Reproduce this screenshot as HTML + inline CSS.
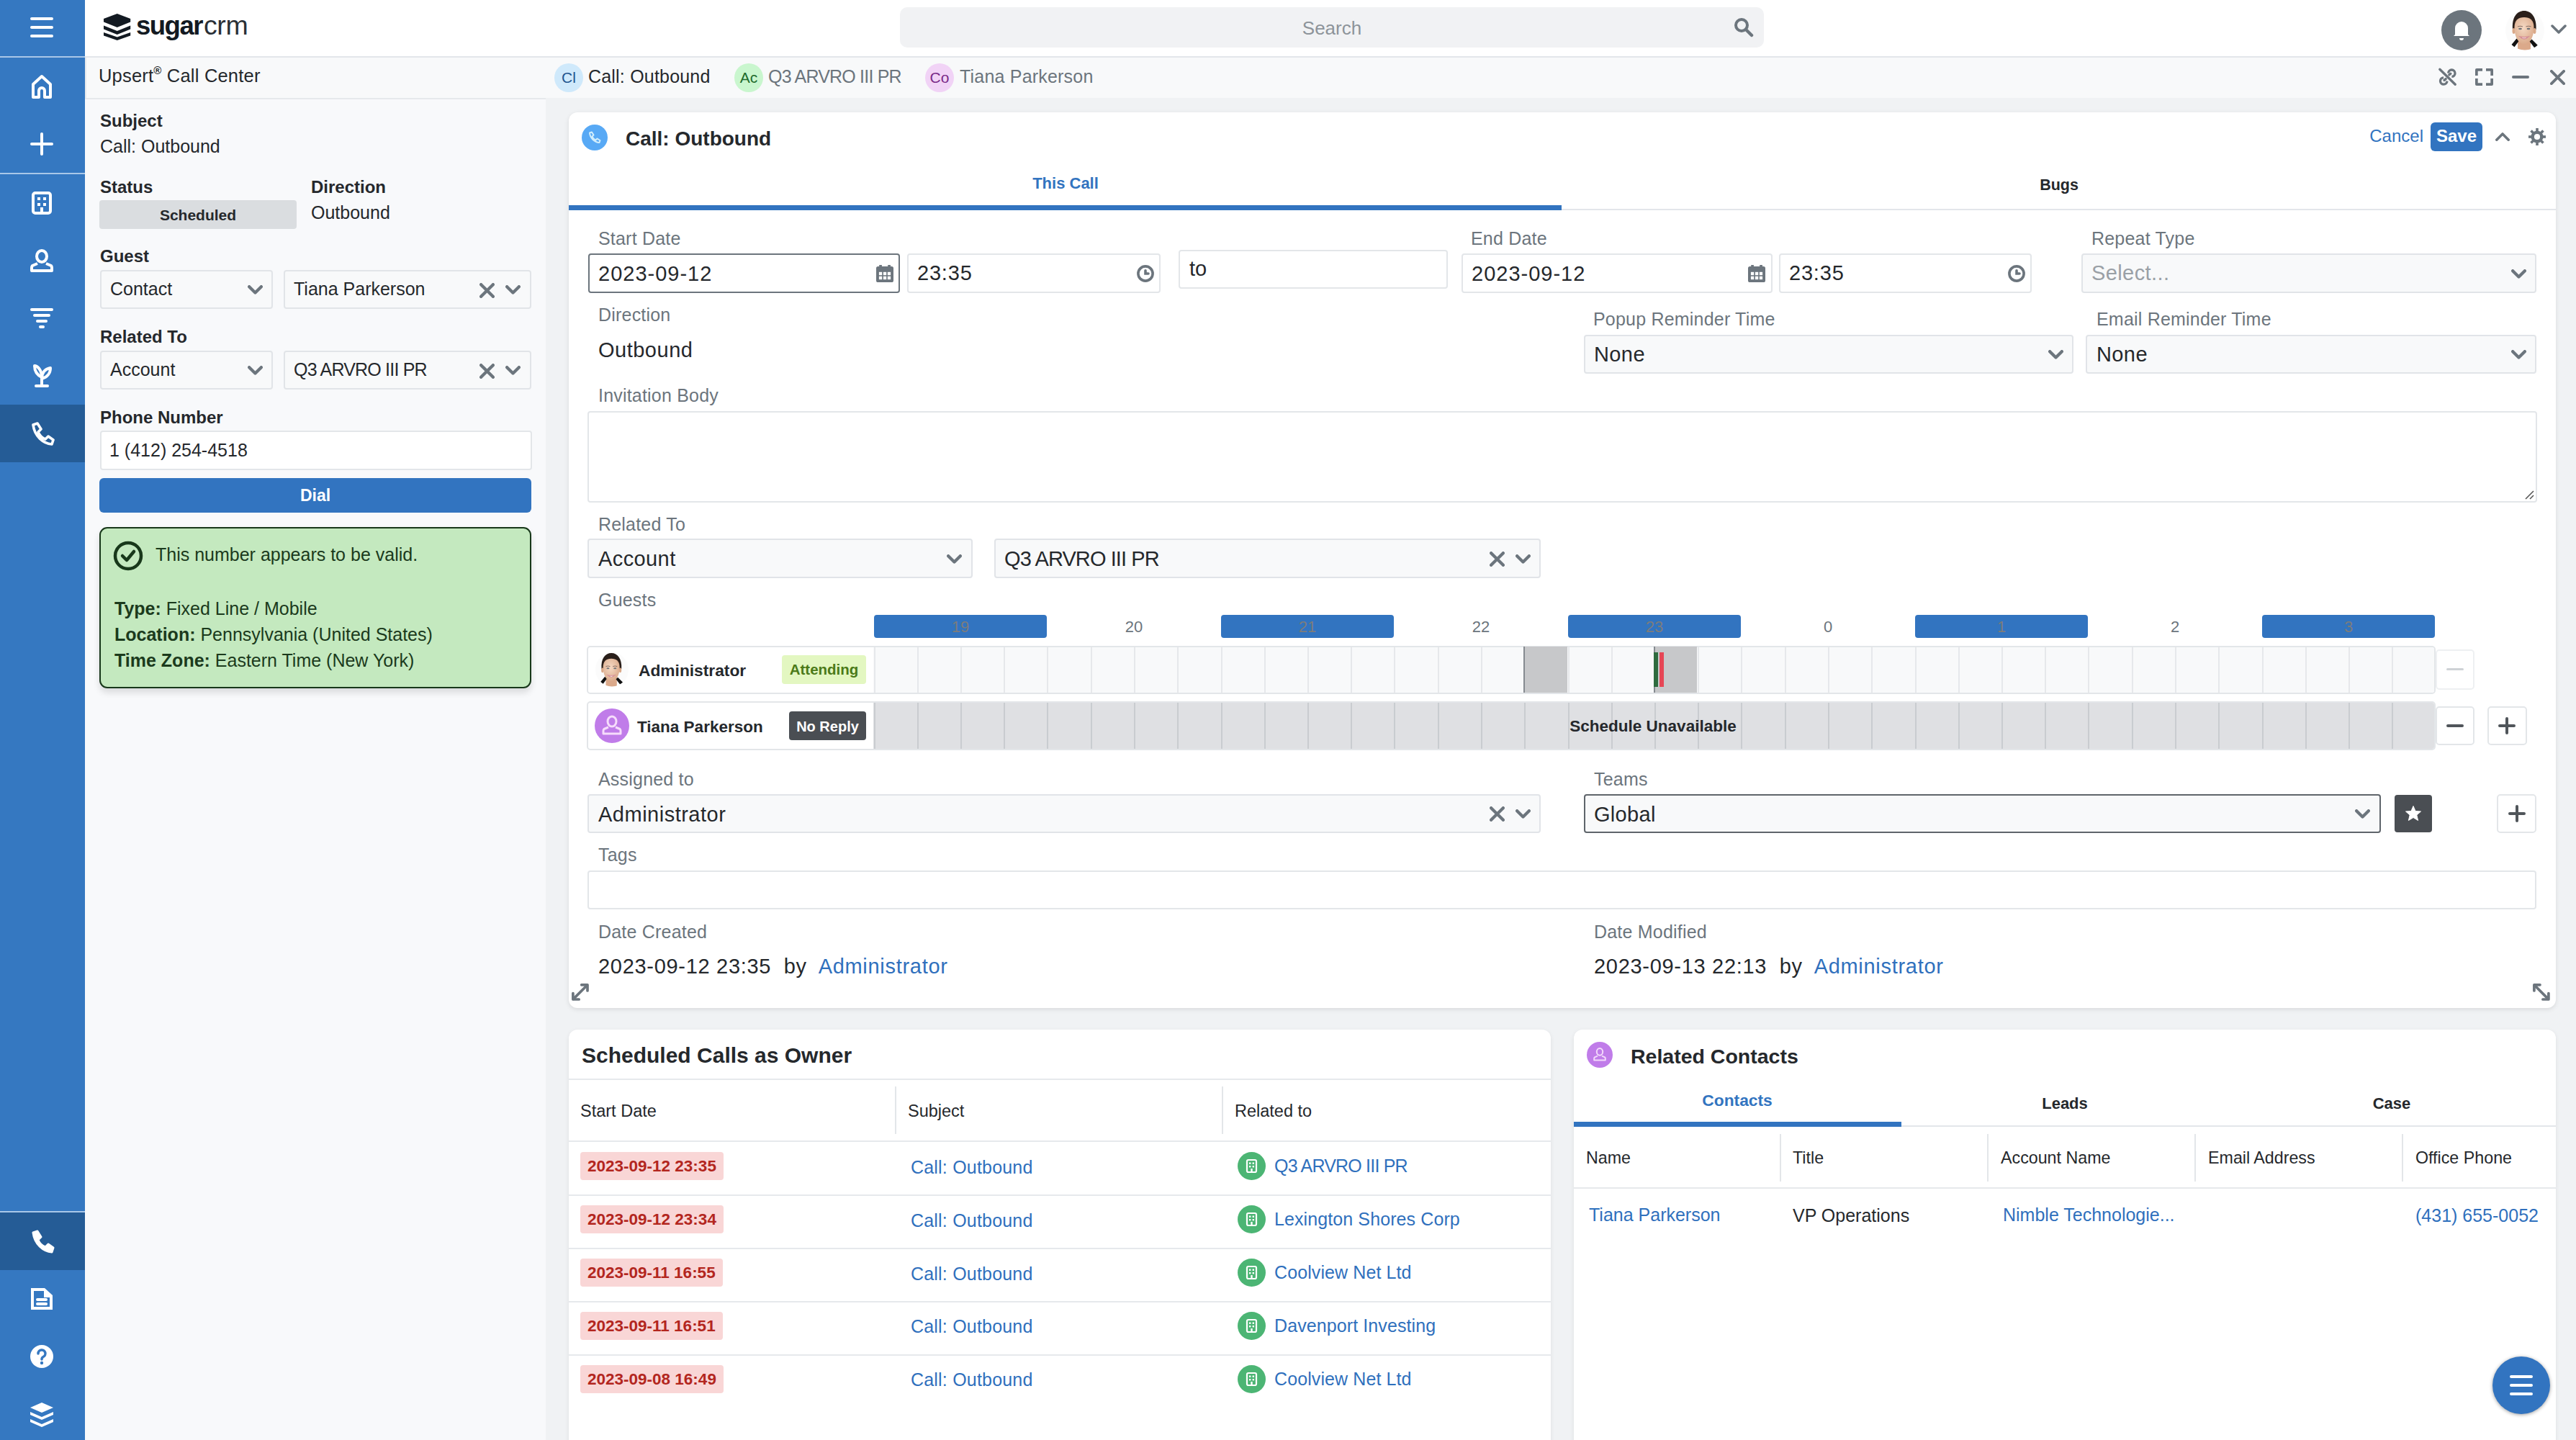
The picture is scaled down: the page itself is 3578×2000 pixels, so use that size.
<!DOCTYPE html><html><head><meta charset="utf-8"><style>
html,body{margin:0;padding:0;width:3578px;height:2000px;overflow:hidden;background:#f0f2f4;font-family:'Liberation Sans', sans-serif;}
.t{position:absolute;line-height:1;white-space:nowrap;}
.b{position:absolute;box-sizing:border-box;}
</style></head><body>
<div class="b" style="left:0px;top:0px;width:3578px;height:78px;background:#fff"></div>
<div class="b" style="left:118px;top:78px;width:3460px;height:2px;background:#e3e6ea"></div>
<div class="b" style="left:118px;top:80px;width:3460px;height:56px;background:#f8f9fa"></div>
<div class="b" style="left:118px;top:136px;width:640px;height:1864px;background:#f8f9fb"></div>
<div class="b" style="left:118px;top:136px;width:640px;height:2px;background:#e6e9ec"></div>
<div class="b" style="left:758px;top:136px;width:2820px;height:1864px;background:#f0f2f4"></div>
<div class="b" style="left:118px;top:80px;width:2px;height:56px;background:#e6e9ec"></div>
<div class="b" style="left:0px;top:0px;width:118px;height:2000px;background:#3578c1"></div>
<div class="b" style="left:0px;top:78px;width:118px;height:2px;background:#a9c7e8"></div>
<div class="b" style="left:0px;top:240px;width:118px;height:2px;background:#a9c7e8"></div>
<div class="b" style="left:0px;top:562px;width:118px;height:80px;background:#255c96"></div>
<div class="b" style="left:0px;top:1682px;width:118px;height:2px;background:#a9c7e8"></div>
<div class="b" style="left:0px;top:1684px;width:118px;height:80px;background:#255c96"></div>
<svg class="b" style="left:40px;top:22px;" width="36" height="32" viewBox="0 0 36 32"><g fill="#fff"><rect x="2" y="2" width="32" height="4" rx="2"/><rect x="2" y="14" width="32" height="4" rx="2"/><rect x="2" y="26" width="32" height="4" rx="2"/></g></svg>
<svg class="b" style="left:42px;top:102px;" width="32" height="36" viewBox="0 0 32 36"><path d="M4 33 V15 L16 4 L28 15 V33 H20 V24 a4 4 0 0 0 -8 0 V33 Z" fill="none" stroke="#fff" stroke-width="4" stroke-linejoin="round"/></svg>
<svg class="b" style="left:40px;top:182px;" width="36" height="36" viewBox="0 0 36 36"><g stroke="#fff" stroke-width="4" stroke-linecap="round"><line x1="18" y1="4" x2="18" y2="32"/><line x1="4" y1="18" x2="32" y2="18"/></g></svg>
<svg class="b" style="left:42px;top:264px;" width="32" height="36" viewBox="0 0 32 36"><rect x="4" y="4" width="24" height="28" rx="3" fill="none" stroke="#fff" stroke-width="4"/><g fill="#fff"><rect x="10" y="10" width="4" height="4"/><rect x="18" y="10" width="4" height="4"/><rect x="10" y="18" width="4" height="4"/><rect x="18" y="18" width="4" height="4"/><rect x="14" y="24" width="4" height="8"/></g></svg>
<svg class="b" style="left:40px;top:344px;" width="36" height="36" viewBox="0 0 36 36"><g fill="none" stroke="#fff" stroke-width="4" stroke-linejoin="round"><ellipse cx="18" cy="12" rx="7" ry="8"/><path d="M12 22 L5 25 Q4 26 4 28 V32 H32 V28 Q32 26 31 25 L24 22"/></g></svg>
<svg class="b" style="left:40px;top:424px;" width="36" height="36" viewBox="0 0 36 36"><g stroke="#fff" stroke-width="4" stroke-linecap="round"><line x1="4" y1="6" x2="32" y2="6"/><line x1="8" y1="14" x2="28" y2="14"/><line x1="12" y1="22" x2="24" y2="22"/><line x1="16" y1="30" x2="20" y2="30"/></g></svg>
<svg class="b" style="left:40px;top:502px;" width="36" height="40" viewBox="0 0 36 40"><g fill="none" stroke="#fff" stroke-width="4" stroke-linecap="round" stroke-linejoin="round"><path d="M18 34 V22"/><path d="M10 34 H26"/><path d="M18 22 C18 12 12 6 8 6 C8 12 10 18 18 22 Z"/><path d="M18 24 C26 22 30 16 30 9 C24 10 18 14 18 24 Z"/></g></svg>
<svg class="b" style="left:40px;top:584px;" width="36" height="36" viewBox="0 0 36 36"><path d="M6 6 L12 4 L17 12 L13 16 C15 21 18 24 23 26 L27 22 L34 27 L32 33 C20 32 8 22 6 6 Z" fill="none" stroke="#fff" stroke-width="3.6" stroke-linejoin="round"/></svg>
<svg class="b" style="left:40px;top:1706px;" width="36" height="36" viewBox="0 0 36 36"><path d="M6 6 L12 4 L17 12 L13 16 C15 21 18 24 23 26 L27 22 L34 27 L32 33 C20 32 8 22 6 6 Z" fill="#fff" stroke="#fff" stroke-width="3" stroke-linejoin="round"/></svg>
<svg class="b" style="left:40px;top:1786px;" width="36" height="36" viewBox="0 0 36 36"><path d="M3 3 H22 L33 13 V33 H3 Z" fill="#fff"/><rect x="7" y="7" width="14" height="22" fill="#3578c1"/><path d="M21 7 V16 H29 V29 H21 Z" fill="#3578c1"/><rect x="10" y="17" width="16" height="4" rx="2" fill="#fff"/><rect x="10" y="23" width="16" height="4" rx="2" fill="#fff"/></svg>
<svg class="b" style="left:40px;top:1866px;" width="36" height="36" viewBox="0 0 36 36"><circle cx="18" cy="18" r="16" fill="#fff"/><path d="M13 14 a5 5 0 1 1 7 4.5 c-1.5 .8 -2 1.5 -2 3.5" fill="none" stroke="#3578c1" stroke-width="3.5" stroke-linecap="round"/><circle cx="18" cy="27" r="2.2" fill="#3578c1"/></svg>
<svg class="b" style="left:40px;top:1946px;" width="36" height="36" viewBox="0 0 36 36"><g fill="#fff"><path d="M18 2 L34 9 L18 16 L2 9 Z"/><path d="M2 15 L18 22 L34 15 V19 L18 26 L2 19 Z"/><path d="M2 25 L18 32 L34 25 V29 L18 36 L2 29 Z"/></g></svg>
<svg class="b" style="left:143.8px;top:19.4px;" width="38" height="38" viewBox="0 0 38 38"><g fill="#131a22"><path d="M18.75 0 L37.2 7.1 V11.6 L18.75 18.9 L0 11.6 V7.1 Z"/><path d="M0 16.5 L18.75 24.1 L37.2 16.5 V21.4 L18.75 29 L0 21.4 Z"/><path d="M0 25.9 L18.75 32.6 L37.2 25.9 V30.4 L18.75 37.1 L0 30.4 Z"/></g></svg>
<div class="t" style="left:189px;top:17.5px;font-size:36.5px;color:#131a22;font-weight:700;letter-spacing:-1.5px">sugar</div>
<div class="t" style="left:283px;top:16.7px;font-size:37.5px;color:#2a3036;font-weight:400;letter-spacing:-0.4px">crm</div>
<div class="b" style="left:1250px;top:10px;width:1200px;height:56px;background:#f1f2f4;border-radius:10px"></div>
<div class="t" style="left:1850px;transform:translateX(-50%);top:26.4px;font-size:26px;color:#8d949a;font-weight:400;">Search</div>
<svg class="b" style="left:2408px;top:24px;" width="28" height="28" viewBox="0 0 28 28"><circle cx="11" cy="11" r="8" fill="none" stroke="#6c757d" stroke-width="4"/><line x1="17" y1="17" x2="25" y2="25" stroke="#6c757d" stroke-width="4.5" stroke-linecap="round"/></svg>
<svg class="b" style="left:3391px;top:14px;" width="56" height="56" viewBox="0 0 56 56"><circle cx="28" cy="28" r="28" fill="#6c757d"/><path d="M19 34 V25 a9 9 0 0 1 18 0 V34 l2 2 H17 Z" fill="#fff"/><path d="M25 39 h6 a3 3 0 0 1 -6 0z" fill="#fff"/></svg>
<svg class="b" style="left:3480px;top:14px;" width="54" height="56" viewBox="0 0 54 56"><defs><clipPath id="av"><ellipse cx="27" cy="28" rx="27" ry="27.5"/></clipPath><radialGradient id="avg" cx="0.45" cy="0.4" r="0.65"><stop offset="0" stop-color="#f5d9c4"/><stop offset="1" stop-color="#d9a888"/></radialGradient></defs><ellipse cx="27" cy="28" rx="27" ry="27.5" fill="#fbfbfb"/><g clip-path="url(#av)"><path d="M7 57 L14 42 L20 40 L33 40 L39 42 L47 57 Z" fill="#fff"/><path d="M17 38 L35 38 L35 57 L17 57 Z" fill="#dba98a"/><path d="M6 51 L15.5 39.5 L19 42.5 L10.5 54 Z" fill="#111"/><path d="M48 52 L36.5 40.5 L33.5 43.5 L43 56 Z" fill="#111"/><path d="M10 27 C8.5 10 16 1 26 1 C36 1 43.5 10 42.5 27 Z" fill="#2a1f1a"/><ellipse cx="11.5" cy="29" rx="2" ry="4" fill="#d9a888"/><ellipse cx="40.5" cy="29" rx="2" ry="4" fill="#d9a888"/><path d="M12.5 24 C12.5 14 18 10 26 10 C34 10 39.5 14 39.5 24 C39.5 37 34 47 26 47 C18 47 12.5 37 12.5 24 Z" fill="url(#avg)"/><path d="M17 23 Q20.5 21.5 24 23" stroke="#8a7065" stroke-width="1.2" fill="none"/><path d="M28.5 23 Q32 21.5 35.5 23" stroke="#8a7065" stroke-width="1.2" fill="none"/><ellipse cx="20.5" cy="26" rx="2.4" ry="1.2" fill="#6f7378"/><ellipse cx="32" cy="26" rx="2.4" ry="1.2" fill="#6f7378"/><path d="M20 37 Q26 43 32 37 Q26 38.5 20 37 Z" fill="#fff" stroke="#d58d95" stroke-width="1.3"/></g></svg>
<svg class="b" style="left:3542px;top:32px;" width="24" height="18" viewBox="0 0 24 18"><path d="M3 4 L12 13 L21 4" fill="none" stroke="#6c757d" stroke-width="3.5" stroke-linecap="round" stroke-linejoin="round"/></svg>
<div class="t" style="left:137px;top:92.8px;font-size:25.5px;color:#25282c;font-weight:400;letter-spacing:0.2px">Upsert<sup style="font-size:15px;vertical-align:top;position:relative;top:-3px;font-weight:700">&reg;</sup> Call Center</div>
<svg class="b" style="left:770px;top:88px;" width="40" height="40" viewBox="0 0 40 40"><circle cx="20" cy="20" r="20" fill="#cfe9fb"/></svg>
<div class="t" style="left:790px;transform:translateX(-50%);top:97.1px;font-size:21px;color:#21558f;font-weight:400;">Cl</div>
<div class="t" style="left:817px;top:94.2px;font-size:25px;color:#25282c;font-weight:400;letter-spacing:0.2px">Call: Outbound</div>
<svg class="b" style="left:1020px;top:88px;" width="40" height="40" viewBox="0 0 40 40"><circle cx="20" cy="20" r="20" fill="#c9f6ce"/></svg>
<div class="t" style="left:1040px;transform:translateX(-50%);top:97.1px;font-size:21px;color:#1f6b2c;font-weight:400;">Ac</div>
<div class="t" style="left:1067px;top:94.2px;font-size:25px;color:#6c757d;font-weight:400;letter-spacing:-0.8px">Q3 ARVRO III PR<span style="letter-spacing:0"></span></div>
<svg class="b" style="left:1285px;top:88px;" width="40" height="40" viewBox="0 0 40 40"><circle cx="20" cy="20" r="20" fill="#f1d3f6"/></svg>
<div class="t" style="left:1305px;transform:translateX(-50%);top:97.1px;font-size:21px;color:#7a2a88;font-weight:400;">Co</div>
<div class="t" style="left:1333px;top:94.2px;font-size:25px;color:#6c757d;font-weight:400;letter-spacing:0.2px">Tiana Parkerson</div>
<svg class="b" style="left:3386px;top:94px;" width="28" height="28" viewBox="0 0 28 28"><g fill="none" stroke="#6c757d" stroke-width="3.3" stroke-linecap="round"><line x1="2.8" y1="2.3" x2="24.2" y2="23.3"/><path d="M14.6 7.6 A4.7 4.7 0 1 1 19.4 12.4" stroke-linecap="butt"/><path d="M12.9 18.6 A4.7 4.7 0 1 1 8.1 13.8" stroke-linecap="butt"/><line x1="15.8" y1="9.9" x2="17.9" y2="8.2"/><line x1="9" y1="17.4" x2="11.2" y2="15.6"/></g></svg>
<svg class="b" style="left:3438px;top:95px;" width="25" height="24" viewBox="0 0 25 24"><g fill="#6c757d"><path d="M0 2 Q0 0 2 0 H10 V3.7 H3.7 V10 H0 Z"/><path d="M25 2 Q25 0 23 0 H15 V3.7 H21.3 V10 H25 Z"/><path d="M0 22 Q0 24 2 24 H10 V20.3 H3.7 V14 H0 Z"/><path d="M25 22 Q25 24 23 24 H15 V20.3 H21.3 V14 H25 Z"/></g></svg>
<svg class="b" style="left:3489px;top:105px;" width="24" height="4" viewBox="0 0 24 4"><rect x="0" y="0" width="24" height="4" rx="2" fill="#6c757d"/></svg>
<svg class="b" style="left:3542px;top:97px;" width="21" height="21" viewBox="0 0 21 21"><g stroke="#6c757d" stroke-width="3.8" stroke-linecap="round"><line x1="1.9" y1="1.9" x2="19.1" y2="19.1"/><line x1="19.1" y1="1.9" x2="1.9" y2="19.1"/></g></svg>
<div class="t" style="left:139px;top:156.1px;font-size:24px;color:#25282c;font-weight:700;">Subject</div>
<div class="t" style="left:139px;top:191.2px;font-size:25px;color:#25282c;font-weight:400;">Call: Outbound</div>
<div class="t" style="left:139px;top:248.1px;font-size:24px;color:#25282c;font-weight:700;">Status</div>
<div class="b" style="left:138px;top:278px;width:274px;height:40px;background:#dadde0;border-radius:4px"></div>
<div class="t" style="left:275px;transform:translateX(-50%);top:287.6px;font-size:21px;color:#25282c;font-weight:700;">Scheduled</div>
<div class="t" style="left:432px;top:248.1px;font-size:24px;color:#25282c;font-weight:700;">Direction</div>
<div class="t" style="left:432px;top:283.2px;font-size:25px;color:#25282c;font-weight:400;">Outbound</div>
<div class="t" style="left:139px;top:344.1px;font-size:24px;color:#25282c;font-weight:700;">Guest</div>
<div class="b" style="left:139px;top:375px;width:240px;height:54px;background:#f8f9fa;border:2px solid #e1e4e8;border-radius:4px"></div>
<div class="t" style="left:153px;top:389.2px;font-size:25px;color:#25282c;font-weight:400;">Contact</div>
<svg class="b" style="left:344px;top:395.5px;" width="21" height="13" viewBox="0 0 21 13"><path d="M2.15 2.15 L10.5 10.549999999999999 L18.85 2.15" fill="none" stroke="#6c757d" stroke-width="4.3" stroke-linecap="round" stroke-linejoin="round"/></svg>
<div class="b" style="left:394px;top:375px;width:344px;height:54px;background:#f8f9fa;border:2px solid #e1e4e8;border-radius:4px"></div>
<div class="t" style="left:408px;top:389.2px;font-size:25px;color:#25282c;font-weight:400;">Tiana Parkerson</div>
<svg class="b" style="left:666px;top:392.5px;" width="21" height="21" viewBox="0 0 21 21"><g stroke="#6c757d" stroke-width="4.3" stroke-linecap="round"><line x1="2.15" y1="2.15" x2="18.85" y2="18.85"/><line x1="18.85" y1="2.15" x2="2.15" y2="18.85"/></g></svg>
<svg class="b" style="left:702px;top:395.5px;" width="21" height="13" viewBox="0 0 21 13"><path d="M2.15 2.15 L10.5 10.549999999999999 L18.85 2.15" fill="none" stroke="#6c757d" stroke-width="4.3" stroke-linecap="round" stroke-linejoin="round"/></svg>
<div class="t" style="left:139px;top:456.1px;font-size:24px;color:#25282c;font-weight:700;">Related To</div>
<div class="b" style="left:139px;top:487px;width:240px;height:54px;background:#f8f9fa;border:2px solid #e1e4e8;border-radius:4px"></div>
<div class="t" style="left:153px;top:501.2px;font-size:25px;color:#25282c;font-weight:400;">Account</div>
<svg class="b" style="left:344px;top:507.5px;" width="21" height="13" viewBox="0 0 21 13"><path d="M2.15 2.15 L10.5 10.549999999999999 L18.85 2.15" fill="none" stroke="#6c757d" stroke-width="4.3" stroke-linecap="round" stroke-linejoin="round"/></svg>
<div class="b" style="left:394px;top:487px;width:344px;height:54px;background:#f8f9fa;border:2px solid #e1e4e8;border-radius:4px"></div>
<div class="t" style="left:408px;top:501.2px;font-size:25px;color:#25282c;font-weight:400;letter-spacing:-0.8px">Q3 ARVRO III PR</div>
<svg class="b" style="left:666px;top:504.5px;" width="21" height="21" viewBox="0 0 21 21"><g stroke="#6c757d" stroke-width="4.3" stroke-linecap="round"><line x1="2.15" y1="2.15" x2="18.85" y2="18.85"/><line x1="18.85" y1="2.15" x2="2.15" y2="18.85"/></g></svg>
<svg class="b" style="left:702px;top:507.5px;" width="21" height="13" viewBox="0 0 21 13"><path d="M2.15 2.15 L10.5 10.549999999999999 L18.85 2.15" fill="none" stroke="#6c757d" stroke-width="4.3" stroke-linecap="round" stroke-linejoin="round"/></svg>
<div class="t" style="left:139px;top:568.1px;font-size:24px;color:#25282c;font-weight:700;">Phone Number</div>
<div class="b" style="left:139px;top:598px;width:600px;height:55px;background:#fff;border:2px solid #e3e6e9;border-radius:4px"></div>
<div class="t" style="left:152px;top:613.2px;font-size:25px;color:#25282c;font-weight:400;">1 (412) 254-4518</div>
<div class="b" style="left:138px;top:664px;width:600px;height:48px;background:#3274c0;border-radius:6px"></div>
<div class="t" style="left:438px;transform:translateX(-50%);top:676.9px;font-size:23px;color:#fff;font-weight:700;">Dial</div>
<div class="b" style="left:138px;top:732px;width:600px;height:224px;background:#c4e9bf;border:2.5px solid #18381a;border-radius:11px;box-shadow:0 6px 10px rgba(0,0,0,0.12)"></div>
<svg class="b" style="left:156px;top:750px;" width="44" height="44" viewBox="0 0 44 44"><circle cx="22" cy="22" r="18" fill="none" stroke="#18381a" stroke-width="4.5"/><path d="M14 22 L20 28 L30 16" fill="none" stroke="#18381a" stroke-width="4.5" stroke-linecap="round" stroke-linejoin="round"/></svg>
<div class="t" style="left:216px;top:758.2px;font-size:25px;color:#1b3a1c;font-weight:400;">This number appears to be valid.</div>
<div class="t" style="left:159px;top:833.2px;font-size:25px;color:#1b3a1c;font-weight:400;"><b>Type:</b> Fixed Line / Mobile</div>
<div class="t" style="left:159px;top:869.2px;font-size:25px;color:#1b3a1c;font-weight:400;"><b>Location:</b> Pennsylvania (United States)</div>
<div class="t" style="left:159px;top:905.2px;font-size:25px;color:#1b3a1c;font-weight:400;"><b>Time Zone:</b> Eastern Time (New York)</div>
<div class="b" style="left:790px;top:156px;width:2760px;height:1244px;background:#fff;border-radius:12px;box-shadow:0 2px 6px rgba(0,0,0,0.10)"></div>
<svg class="b" style="left:808px;top:173px;" width="36" height="36" viewBox="0 0 36 36"><circle cx="18" cy="18" r="18" fill="#58a9f5"/><path d="M11 11.5 L14 10.5 L16.5 14.5 L14.5 16.5 C15.5 19 17 20.5 19.5 21.5 L21.5 19.5 L25.5 22 L24.5 25 C17.5 24.5 11.5 18.5 11 11.5 Z" fill="none" stroke="#d2eefc" stroke-width="2" stroke-linejoin="round"/></svg>
<div class="t" style="left:869px;top:179.2px;font-size:28px;color:#25282c;font-weight:700;">Call: Outbound</div>
<div class="t" style="right:212px;top:177.1px;font-size:24px;color:#3274c0;font-weight:400;">Cancel</div>
<div class="b" style="left:3376px;top:170px;width:72px;height:40px;background:#3274c0;border-radius:6px"></div>
<div class="t" style="left:3412px;transform:translateX(-50%);top:177.1px;font-size:24px;color:#fff;font-weight:700;">Save</div>
<svg class="b" style="left:3466px;top:184px;" width="20" height="12" viewBox="0 0 20 12"><path d="M1.8 10.2 L10 2 L18.2 10.2" fill="none" stroke="#6c757d" stroke-width="3.6" stroke-linecap="round" stroke-linejoin="round"/></svg>
<svg class="b" style="left:3512px;top:178px;" width="24" height="24" viewBox="0 0 24 24"><g fill="#6c757d"><circle cx="12" cy="12" r="8.6"/><rect x="10.2" y="0" width="3.6" height="24" transform="rotate(0 12 12)"/><rect x="10.2" y="0" width="3.6" height="24" transform="rotate(45 12 12)"/><rect x="10.2" y="0" width="3.6" height="24" transform="rotate(90 12 12)"/><rect x="10.2" y="0" width="3.6" height="24" transform="rotate(135 12 12)"/></g><circle cx="12" cy="12" r="4.1" fill="#fff"/></svg>
<div class="b" style="left:790px;top:290px;width:2760px;height:2px;background:#e3e6ea"></div>
<div class="b" style="left:790px;top:285px;width:1379px;height:7px;background:#3274c0"></div>
<div class="t" style="left:1480px;transform:translateX(-50%);top:243.8px;font-size:22px;color:#3274c0;font-weight:700;">This Call</div>
<div class="t" style="left:2860px;transform:translateX(-50%);top:247.2px;font-size:21.5px;color:#25282c;font-weight:700;">Bugs</div>
<div class="t" style="left:831px;top:319.2px;font-size:25px;color:#6c757d;font-weight:400;letter-spacing:0.2px">Start Date</div>
<div class="b" style="left:817px;top:352px;width:433px;height:55px;background:#fff;border:2px solid #6c757d;border-radius:4px"></div>
<div class="t" style="left:831px;top:365.9px;font-size:29px;color:#25282c;font-weight:400;letter-spacing:1px">2023-09-12</div>
<svg class="b" style="left:1217px;top:368px;" width="24" height="24" viewBox="0 0 24 24"><rect x="0" y="2" width="24" height="22" rx="2.6" fill="#6c757d"/><rect x="4.2" y="0" width="3.7" height="4" fill="#6c757d"/><rect x="16.2" y="0" width="3.7" height="4" fill="#6c757d"/><g fill="#fff"><rect x="3.9" y="9.8" width="4.3" height="4.4"/><rect x="9.9" y="9.8" width="4.3" height="4.4"/><rect x="15.8" y="9.8" width="4.3" height="4.4"/><rect x="3.9" y="15.75" width="4.3" height="4.4"/><rect x="9.9" y="15.75" width="4.3" height="4.4"/><rect x="15.8" y="15.75" width="4.3" height="4.4"/></g></svg>
<div class="b" style="left:1260px;top:352px;width:352px;height:55px;background:#fff;border:2px solid #e3e6e9;border-radius:4px"></div>
<div class="t" style="left:1274px;top:364.9px;font-size:29px;color:#25282c;font-weight:400;letter-spacing:0.8px">23:35</div>
<svg class="b" style="left:1579px;top:368px;" width="24" height="24" viewBox="0 0 24 24"><circle cx="12" cy="12" r="10.1" fill="none" stroke="#6c757d" stroke-width="3.6"/><path d="M12 7.7 V12 H16" fill="none" stroke="#6c757d" stroke-width="3.6" stroke-linecap="round" stroke-linejoin="miter"/></svg>
<div class="b" style="left:1637px;top:347px;width:374px;height:54px;background:#fff;border:2px solid #e3e6e9;border-radius:4px"></div>
<div class="t" style="left:1652px;top:358.9px;font-size:29px;color:#25282c;font-weight:400;">to</div>
<div class="t" style="left:2043px;top:319.2px;font-size:25px;color:#6c757d;font-weight:400;letter-spacing:0.2px">End Date</div>
<div class="b" style="left:2030px;top:352px;width:432px;height:55px;background:#fff;border:2px solid #e3e6e9;border-radius:4px"></div>
<div class="t" style="left:2044px;top:365.9px;font-size:29px;color:#25282c;font-weight:400;letter-spacing:1px">2023-09-12</div>
<svg class="b" style="left:2428px;top:368px;" width="24" height="24" viewBox="0 0 24 24"><rect x="0" y="2" width="24" height="22" rx="2.6" fill="#6c757d"/><rect x="4.2" y="0" width="3.7" height="4" fill="#6c757d"/><rect x="16.2" y="0" width="3.7" height="4" fill="#6c757d"/><g fill="#fff"><rect x="3.9" y="9.8" width="4.3" height="4.4"/><rect x="9.9" y="9.8" width="4.3" height="4.4"/><rect x="15.8" y="9.8" width="4.3" height="4.4"/><rect x="3.9" y="15.75" width="4.3" height="4.4"/><rect x="9.9" y="15.75" width="4.3" height="4.4"/><rect x="15.8" y="15.75" width="4.3" height="4.4"/></g></svg>
<div class="b" style="left:2471px;top:352px;width:351px;height:55px;background:#fff;border:2px solid #e3e6e9;border-radius:4px"></div>
<div class="t" style="left:2485px;top:364.9px;font-size:29px;color:#25282c;font-weight:400;letter-spacing:0.8px">23:35</div>
<svg class="b" style="left:2789px;top:368px;" width="24" height="24" viewBox="0 0 24 24"><circle cx="12" cy="12" r="10.1" fill="none" stroke="#6c757d" stroke-width="3.6"/><path d="M12 7.7 V12 H16" fill="none" stroke="#6c757d" stroke-width="3.6" stroke-linecap="round" stroke-linejoin="miter"/></svg>
<div class="t" style="left:2905px;top:319.2px;font-size:25px;color:#6c757d;font-weight:400;letter-spacing:0.2px">Repeat Type</div>
<div class="b" style="left:2891px;top:352px;width:632px;height:55px;background:#f8f9fa;border:2px solid #e1e4e8;border-radius:4px"></div>
<div class="t" style="left:2905px;top:364.9px;font-size:29px;color:#9aa0a6;font-weight:400;letter-spacing:0.4px">Select...</div>
<svg class="b" style="left:3488px;top:373.5px;" width="21" height="13" viewBox="0 0 21 13"><path d="M2.15 2.15 L10.5 10.549999999999999 L18.85 2.15" fill="none" stroke="#6c757d" stroke-width="4.3" stroke-linecap="round" stroke-linejoin="round"/></svg>
<div class="t" style="left:831px;top:425.2px;font-size:25px;color:#6c757d;font-weight:400;letter-spacing:0.2px">Direction</div>
<div class="t" style="left:831px;top:471.9px;font-size:29px;color:#25282c;font-weight:400;letter-spacing:0.5px">Outbound</div>
<div class="t" style="left:2213px;top:431.2px;font-size:25px;color:#6c757d;font-weight:400;letter-spacing:0.2px">Popup Reminder Time</div>
<div class="b" style="left:2200px;top:465px;width:680px;height:54px;background:#f8f9fa;border:2px solid #e1e4e8;border-radius:4px"></div>
<div class="t" style="left:2214px;top:477.9px;font-size:29px;color:#25282c;font-weight:400;letter-spacing:0.4px">None</div>
<svg class="b" style="left:2845px;top:486px;" width="21" height="13" viewBox="0 0 21 13"><path d="M2.15 2.15 L10.5 10.549999999999999 L18.85 2.15" fill="none" stroke="#6c757d" stroke-width="4.3" stroke-linecap="round" stroke-linejoin="round"/></svg>
<div class="t" style="left:2912px;top:431.2px;font-size:25px;color:#6c757d;font-weight:400;letter-spacing:0.2px">Email Reminder Time</div>
<div class="b" style="left:2897px;top:465px;width:626px;height:54px;background:#f8f9fa;border:2px solid #e1e4e8;border-radius:4px"></div>
<div class="t" style="left:2912px;top:477.9px;font-size:29px;color:#25282c;font-weight:400;letter-spacing:0.4px">None</div>
<svg class="b" style="left:3488px;top:485.5px;" width="21" height="13" viewBox="0 0 21 13"><path d="M2.15 2.15 L10.5 10.549999999999999 L18.85 2.15" fill="none" stroke="#6c757d" stroke-width="4.3" stroke-linecap="round" stroke-linejoin="round"/></svg>
<div class="t" style="left:831px;top:537.2px;font-size:25px;color:#6c757d;font-weight:400;letter-spacing:0.2px">Invitation Body</div>
<div class="b" style="left:816px;top:571px;width:2708px;height:127px;background:#fff;border:2px solid #e3e6e9;border-radius:4px"></div>
<svg class="b" style="left:3506px;top:680px;" width="14" height="14" viewBox="0 0 14 14"><g stroke="#555" stroke-width="1.6"><line x1="2" y1="13" x2="13" y2="2"/><line x1="8" y1="13" x2="13" y2="8"/></g></svg>
<div class="t" style="left:831px;top:716.2px;font-size:25px;color:#6c757d;font-weight:400;letter-spacing:0.2px">Related To</div>
<div class="b" style="left:816px;top:748px;width:535px;height:55px;background:#f8f9fa;border:2px solid #e1e4e8;border-radius:4px"></div>
<div class="t" style="left:831px;top:761.9px;font-size:29px;color:#25282c;font-weight:400;letter-spacing:0.4px">Account</div>
<svg class="b" style="left:1315px;top:769.5px;" width="21" height="13" viewBox="0 0 21 13"><path d="M2.15 2.15 L10.5 10.549999999999999 L18.85 2.15" fill="none" stroke="#6c757d" stroke-width="4.3" stroke-linecap="round" stroke-linejoin="round"/></svg>
<div class="b" style="left:1381px;top:748px;width:759px;height:55px;background:#f8f9fa;border:2px solid #e1e4e8;border-radius:4px"></div>
<div class="t" style="left:1395px;top:761.9px;font-size:29px;color:#25282c;font-weight:400;letter-spacing:-0.9px">Q3 ARVRO III PR</div>
<svg class="b" style="left:2069px;top:765.5px;" width="21" height="21" viewBox="0 0 21 21"><g stroke="#6c757d" stroke-width="4.3" stroke-linecap="round"><line x1="2.15" y1="2.15" x2="18.85" y2="18.85"/><line x1="18.85" y1="2.15" x2="2.15" y2="18.85"/></g></svg>
<svg class="b" style="left:2105px;top:769.5px;" width="21" height="13" viewBox="0 0 21 13"><path d="M2.15 2.15 L10.5 10.549999999999999 L18.85 2.15" fill="none" stroke="#6c757d" stroke-width="4.3" stroke-linecap="round" stroke-linejoin="round"/></svg>
<div class="t" style="left:831px;top:821.2px;font-size:25px;color:#6c757d;font-weight:400;letter-spacing:0.2px">Guests</div>
<div class="b" style="left:1214px;top:854px;width:240px;height:32px;background:#3274c0;border-radius:4px"></div>
<div class="t" style="left:1334px;transform:translateX(-50%);top:859.8px;font-size:22px;color:#7c7c7c;font-weight:400;">19</div>
<div class="t" style="left:1575px;transform:translateX(-50%);top:859.8px;font-size:22px;color:#6c757d;font-weight:400;">20</div>
<div class="b" style="left:1696px;top:854px;width:240px;height:32px;background:#3274c0;border-radius:4px"></div>
<div class="t" style="left:1816px;transform:translateX(-50%);top:859.8px;font-size:22px;color:#7c7c7c;font-weight:400;">21</div>
<div class="t" style="left:2057px;transform:translateX(-50%);top:859.8px;font-size:22px;color:#6c757d;font-weight:400;">22</div>
<div class="b" style="left:2178px;top:854px;width:240px;height:32px;background:#3274c0;border-radius:4px"></div>
<div class="t" style="left:2298px;transform:translateX(-50%);top:859.8px;font-size:22px;color:#7c7c7c;font-weight:400;">23</div>
<div class="t" style="left:2539px;transform:translateX(-50%);top:859.8px;font-size:22px;color:#6c757d;font-weight:400;">0</div>
<div class="b" style="left:2660px;top:854px;width:240px;height:32px;background:#3274c0;border-radius:4px"></div>
<div class="t" style="left:2780px;transform:translateX(-50%);top:859.8px;font-size:22px;color:#7c7c7c;font-weight:400;">1</div>
<div class="t" style="left:3021px;transform:translateX(-50%);top:859.8px;font-size:22px;color:#6c757d;font-weight:400;">2</div>
<div class="b" style="left:3142px;top:854px;width:240px;height:32px;background:#3274c0;border-radius:4px"></div>
<div class="t" style="left:3262px;transform:translateX(-50%);top:859.8px;font-size:22px;color:#7c7c7c;font-weight:400;">3</div>
<div class="b" style="left:815px;top:897px;width:2568px;height:67px;background:#fff;border:2px solid #e3e6e9;border-radius:5px"></div>
<div class="b" style="left:1213px;top:899px;width:2168px;height:63px;background:#f8f9fa;border-top-right-radius:3px;border-bottom-right-radius:3px"></div>
<div class="b" style="left:1214px;top:899px;width:2px;height:63px;background:#e6e8eb"></div>
<div class="b" style="left:1274px;top:899px;width:2px;height:63px;background:#e6e8eb"></div>
<div class="b" style="left:1334px;top:899px;width:2px;height:63px;background:#e6e8eb"></div>
<div class="b" style="left:1394px;top:899px;width:2px;height:63px;background:#e6e8eb"></div>
<div class="b" style="left:1454px;top:899px;width:2px;height:63px;background:#e6e8eb"></div>
<div class="b" style="left:1515px;top:899px;width:2px;height:63px;background:#e6e8eb"></div>
<div class="b" style="left:1575px;top:899px;width:2px;height:63px;background:#e6e8eb"></div>
<div class="b" style="left:1635px;top:899px;width:2px;height:63px;background:#e6e8eb"></div>
<div class="b" style="left:1696px;top:899px;width:2px;height:63px;background:#e6e8eb"></div>
<div class="b" style="left:1756px;top:899px;width:2px;height:63px;background:#e6e8eb"></div>
<div class="b" style="left:1816px;top:899px;width:2px;height:63px;background:#e6e8eb"></div>
<div class="b" style="left:1876px;top:899px;width:2px;height:63px;background:#e6e8eb"></div>
<div class="b" style="left:1936px;top:899px;width:2px;height:63px;background:#e6e8eb"></div>
<div class="b" style="left:1997px;top:899px;width:2px;height:63px;background:#e6e8eb"></div>
<div class="b" style="left:2057px;top:899px;width:2px;height:63px;background:#e6e8eb"></div>
<div class="b" style="left:2117px;top:899px;width:2px;height:63px;background:#e6e8eb"></div>
<div class="b" style="left:2178px;top:899px;width:2px;height:63px;background:#e6e8eb"></div>
<div class="b" style="left:2238px;top:899px;width:2px;height:63px;background:#e6e8eb"></div>
<div class="b" style="left:2298px;top:899px;width:2px;height:63px;background:#e6e8eb"></div>
<div class="b" style="left:2358px;top:899px;width:2px;height:63px;background:#e6e8eb"></div>
<div class="b" style="left:2418px;top:899px;width:2px;height:63px;background:#e6e8eb"></div>
<div class="b" style="left:2479px;top:899px;width:2px;height:63px;background:#e6e8eb"></div>
<div class="b" style="left:2539px;top:899px;width:2px;height:63px;background:#e6e8eb"></div>
<div class="b" style="left:2599px;top:899px;width:2px;height:63px;background:#e6e8eb"></div>
<div class="b" style="left:2660px;top:899px;width:2px;height:63px;background:#e6e8eb"></div>
<div class="b" style="left:2720px;top:899px;width:2px;height:63px;background:#e6e8eb"></div>
<div class="b" style="left:2780px;top:899px;width:2px;height:63px;background:#e6e8eb"></div>
<div class="b" style="left:2840px;top:899px;width:2px;height:63px;background:#e6e8eb"></div>
<div class="b" style="left:2900px;top:899px;width:2px;height:63px;background:#e6e8eb"></div>
<div class="b" style="left:2961px;top:899px;width:2px;height:63px;background:#e6e8eb"></div>
<div class="b" style="left:3021px;top:899px;width:2px;height:63px;background:#e6e8eb"></div>
<div class="b" style="left:3081px;top:899px;width:2px;height:63px;background:#e6e8eb"></div>
<div class="b" style="left:3142px;top:899px;width:2px;height:63px;background:#e6e8eb"></div>
<div class="b" style="left:3202px;top:899px;width:2px;height:63px;background:#e6e8eb"></div>
<div class="b" style="left:3262px;top:899px;width:2px;height:63px;background:#e6e8eb"></div>
<div class="b" style="left:3322px;top:899px;width:2px;height:63px;background:#e6e8eb"></div>
<div class="b" style="left:2116px;top:898px;width:61px;height:64px;background:#c7c8ca"></div>
<div class="b" style="left:2116px;top:898px;width:2px;height:64px;background:#868b90"></div>
<div class="b" style="left:2297px;top:898px;width:60px;height:64px;background:#c7c8ca"></div>
<div class="b" style="left:2297px;top:898px;width:2px;height:64px;background:#868b90"></div>
<div class="b" style="left:2297px;top:906px;width:6px;height:48px;background:#2e6b3e"></div>
<div class="b" style="left:2305px;top:906px;width:6px;height:48px;background:#e64655"></div>
<div class="b" style="left:815px;top:974px;width:2568px;height:68px;background:#fff;border:2px solid #e3e6e9;border-radius:5px"></div>
<div class="b" style="left:1213px;top:976px;width:2168px;height:64px;background:#dfe0e3;border-top-right-radius:3px;border-bottom-right-radius:3px"></div>
<div class="b" style="left:1214px;top:976px;width:2px;height:64px;background:#c9ccd0"></div>
<div class="b" style="left:1274px;top:976px;width:2px;height:64px;background:#c9ccd0"></div>
<div class="b" style="left:1334px;top:976px;width:2px;height:64px;background:#c9ccd0"></div>
<div class="b" style="left:1394px;top:976px;width:2px;height:64px;background:#c9ccd0"></div>
<div class="b" style="left:1454px;top:976px;width:2px;height:64px;background:#c9ccd0"></div>
<div class="b" style="left:1515px;top:976px;width:2px;height:64px;background:#c9ccd0"></div>
<div class="b" style="left:1575px;top:976px;width:2px;height:64px;background:#c9ccd0"></div>
<div class="b" style="left:1635px;top:976px;width:2px;height:64px;background:#c9ccd0"></div>
<div class="b" style="left:1696px;top:976px;width:2px;height:64px;background:#c9ccd0"></div>
<div class="b" style="left:1756px;top:976px;width:2px;height:64px;background:#c9ccd0"></div>
<div class="b" style="left:1816px;top:976px;width:2px;height:64px;background:#c9ccd0"></div>
<div class="b" style="left:1876px;top:976px;width:2px;height:64px;background:#c9ccd0"></div>
<div class="b" style="left:1936px;top:976px;width:2px;height:64px;background:#c9ccd0"></div>
<div class="b" style="left:1997px;top:976px;width:2px;height:64px;background:#c9ccd0"></div>
<div class="b" style="left:2057px;top:976px;width:2px;height:64px;background:#c9ccd0"></div>
<div class="b" style="left:2117px;top:976px;width:2px;height:64px;background:#c9ccd0"></div>
<div class="b" style="left:2178px;top:976px;width:2px;height:64px;background:#c9ccd0"></div>
<div class="b" style="left:2238px;top:976px;width:2px;height:64px;background:#c9ccd0"></div>
<div class="b" style="left:2298px;top:976px;width:2px;height:64px;background:#c9ccd0"></div>
<div class="b" style="left:2358px;top:976px;width:2px;height:64px;background:#c9ccd0"></div>
<div class="b" style="left:2418px;top:976px;width:2px;height:64px;background:#c9ccd0"></div>
<div class="b" style="left:2479px;top:976px;width:2px;height:64px;background:#c9ccd0"></div>
<div class="b" style="left:2539px;top:976px;width:2px;height:64px;background:#c9ccd0"></div>
<div class="b" style="left:2599px;top:976px;width:2px;height:64px;background:#c9ccd0"></div>
<div class="b" style="left:2660px;top:976px;width:2px;height:64px;background:#c9ccd0"></div>
<div class="b" style="left:2720px;top:976px;width:2px;height:64px;background:#c9ccd0"></div>
<div class="b" style="left:2780px;top:976px;width:2px;height:64px;background:#c9ccd0"></div>
<div class="b" style="left:2840px;top:976px;width:2px;height:64px;background:#c9ccd0"></div>
<div class="b" style="left:2900px;top:976px;width:2px;height:64px;background:#c9ccd0"></div>
<div class="b" style="left:2961px;top:976px;width:2px;height:64px;background:#c9ccd0"></div>
<div class="b" style="left:3021px;top:976px;width:2px;height:64px;background:#c9ccd0"></div>
<div class="b" style="left:3081px;top:976px;width:2px;height:64px;background:#c9ccd0"></div>
<div class="b" style="left:3142px;top:976px;width:2px;height:64px;background:#c9ccd0"></div>
<div class="b" style="left:3202px;top:976px;width:2px;height:64px;background:#c9ccd0"></div>
<div class="b" style="left:3262px;top:976px;width:2px;height:64px;background:#c9ccd0"></div>
<div class="b" style="left:3322px;top:976px;width:2px;height:64px;background:#c9ccd0"></div>
<div class="t" style="left:2296px;transform:translateX(-50%);top:998.4px;font-size:22.5px;color:#25282c;font-weight:700;">Schedule Unavailable</div>
<svg class="b" style="left:827px;top:906px;" width="46" height="48" viewBox="0 0 54 56"><defs><clipPath id="av2"><ellipse cx="27" cy="28" rx="27" ry="27.5"/></clipPath><radialGradient id="av2g" cx="0.45" cy="0.4" r="0.65"><stop offset="0" stop-color="#f5d9c4"/><stop offset="1" stop-color="#d9a888"/></radialGradient></defs><ellipse cx="27" cy="28" rx="27" ry="27.5" fill="#fbfbfb"/><g clip-path="url(#av2)"><path d="M7 57 L14 42 L20 40 L33 40 L39 42 L47 57 Z" fill="#fff"/><path d="M17 38 L35 38 L35 57 L17 57 Z" fill="#dba98a"/><path d="M6 51 L15.5 39.5 L19 42.5 L10.5 54 Z" fill="#111"/><path d="M48 52 L36.5 40.5 L33.5 43.5 L43 56 Z" fill="#111"/><path d="M10 27 C8.5 10 16 1 26 1 C36 1 43.5 10 42.5 27 Z" fill="#2a1f1a"/><ellipse cx="11.5" cy="29" rx="2" ry="4" fill="#d9a888"/><ellipse cx="40.5" cy="29" rx="2" ry="4" fill="#d9a888"/><path d="M12.5 24 C12.5 14 18 10 26 10 C34 10 39.5 14 39.5 24 C39.5 37 34 47 26 47 C18 47 12.5 37 12.5 24 Z" fill="url(#av2g)"/><path d="M17 23 Q20.5 21.5 24 23" stroke="#8a7065" stroke-width="1.2" fill="none"/><path d="M28.5 23 Q32 21.5 35.5 23" stroke="#8a7065" stroke-width="1.2" fill="none"/><ellipse cx="20.5" cy="26" rx="2.4" ry="1.2" fill="#6f7378"/><ellipse cx="32" cy="26" rx="2.4" ry="1.2" fill="#6f7378"/><path d="M20 37 Q26 43 32 37 Q26 38.5 20 37 Z" fill="#fff" stroke="#d58d95" stroke-width="1.3"/></g></svg>
<div class="t" style="left:887px;top:920.1px;font-size:22.75px;color:#25282c;font-weight:700;">Administrator</div>
<div class="b" style="left:1086px;top:910px;width:117px;height:40px;background:#e3f7c1;border-radius:4px"></div>
<div class="t" style="left:1144.5px;transform:translateX(-50%);top:920.0px;font-size:20.5px;color:#4b7a18;font-weight:700;">Attending</div>
<svg class="b" style="left:826px;top:984px;" width="48" height="48" viewBox="0 0 48 48"><circle cx="24" cy="24" r="24" fill="#c07ce9"/><g fill="none" stroke="#f6dcfb" stroke-width="3" stroke-linejoin="round"><ellipse cx="24" cy="18" rx="6" ry="7"/><path d="M19 26 L13 28.5 Q12 29.5 12 31 V35 H36 V31 Q36 29.5 35 28.5 L29 26"/></g></svg>
<div class="t" style="left:885px;top:998.9px;font-size:22.5px;color:#25282c;font-weight:700;">Tiana Parkerson</div>
<div class="b" style="left:1096px;top:988px;width:107px;height:40px;background:#4a4e53;border-radius:4px"></div>
<div class="t" style="left:1149.5px;transform:translateX(-50%);top:998.5px;font-size:20px;color:#fff;font-weight:700;">No Reply</div>
<div class="b" style="left:3383px;top:902px;width:54px;height:56px;background:#fff;border:2px solid #eef0f2;border-radius:5px"></div>
<div class="b" style="left:3398px;top:928px;width:24px;height:3px;background:#ced2d6;border-radius:2px"></div>
<div class="b" style="left:3383px;top:981px;width:54px;height:54px;background:#fff;border:2px solid #e3e6e9;border-radius:5px"></div>
<div class="b" style="left:3398px;top:1006px;width:24px;height:4px;background:#50555a;border-radius:2px"></div>
<div class="b" style="left:3455px;top:981px;width:55px;height:54px;background:#fff;border:2px solid #e3e6e9;border-radius:5px"></div>
<div class="b" style="left:3470px;top:1006px;width:24px;height:4px;background:#50555a;border-radius:2px"></div>
<div class="b" style="left:3480px;top:996px;width:4px;height:24px;background:#50555a;border-radius:2px"></div>
<div class="t" style="left:831px;top:1070.2px;font-size:25px;color:#6c757d;font-weight:400;letter-spacing:0.2px">Assigned to</div>
<div class="b" style="left:816px;top:1103px;width:1324px;height:54px;background:#f8f9fa;border:2px solid #e1e4e8;border-radius:4px"></div>
<div class="t" style="left:831px;top:1116.9px;font-size:29px;color:#25282c;font-weight:400;letter-spacing:0.5px">Administrator</div>
<svg class="b" style="left:2069px;top:1120px;" width="21" height="21" viewBox="0 0 21 21"><g stroke="#6c757d" stroke-width="4.3" stroke-linecap="round"><line x1="2.15" y1="2.15" x2="18.85" y2="18.85"/><line x1="18.85" y1="2.15" x2="2.15" y2="18.85"/></g></svg>
<svg class="b" style="left:2105px;top:1124px;" width="21" height="13" viewBox="0 0 21 13"><path d="M2.15 2.15 L10.5 10.549999999999999 L18.85 2.15" fill="none" stroke="#6c757d" stroke-width="4.3" stroke-linecap="round" stroke-linejoin="round"/></svg>
<div class="t" style="left:2214px;top:1070.2px;font-size:25px;color:#6c757d;font-weight:400;letter-spacing:0.2px">Teams</div>
<div class="b" style="left:2200px;top:1103px;width:1107px;height:54px;background:#f8f9fa;border:2px solid #5f656b;border-radius:4px"></div>
<div class="t" style="left:2214px;top:1116.9px;font-size:29px;color:#25282c;font-weight:400;letter-spacing:0.3px">Global</div>
<svg class="b" style="left:3271px;top:1124px;" width="21" height="13" viewBox="0 0 21 13"><path d="M2.15 2.15 L10.5 10.549999999999999 L18.85 2.15" fill="none" stroke="#6c757d" stroke-width="4.3" stroke-linecap="round" stroke-linejoin="round"/></svg>
<div class="b" style="left:3326px;top:1104px;width:52px;height:52px;background:#4a4e53;border-radius:4px"></div>
<svg class="b" style="left:3340px;top:1118px;" width="24" height="24" viewBox="0 0 24 24"><path d="M12 1.5 L15 8.5 L22.5 9 L16.8 14 L18.6 21.5 L12 17.5 L5.4 21.5 L7.2 14 L1.5 9 L9 8.5 Z" fill="#fff" stroke="#fff" stroke-width="1" stroke-linejoin="round"/></svg>
<div class="b" style="left:3468px;top:1103px;width:55px;height:54px;background:#fff;border:2px solid #e3e6e9;border-radius:5px"></div>
<div class="b" style="left:3484px;top:1128px;width:24px;height:4px;background:#50555a;border-radius:2px"></div>
<div class="b" style="left:3494px;top:1118px;width:4px;height:24px;background:#50555a;border-radius:2px"></div>
<div class="t" style="left:831px;top:1175.2px;font-size:25px;color:#6c757d;font-weight:400;letter-spacing:0.2px">Tags</div>
<div class="b" style="left:816px;top:1209px;width:2707px;height:54px;background:#fff;border:2px solid #e3e6e9;border-radius:4px"></div>
<div class="t" style="left:831px;top:1282.2px;font-size:25px;color:#6c757d;font-weight:400;letter-spacing:0.2px">Date Created</div>
<div class="t" style="left:831px;top:1327.9px;font-size:29px;color:#25282c;font-weight:400;letter-spacing:0.7px">2023-09-12 23:35&nbsp;&nbsp;by&nbsp; <span style="color:#2f70bd">Administrator</span></div>
<div class="t" style="left:2214px;top:1282.2px;font-size:25px;color:#6c757d;font-weight:400;letter-spacing:0.2px">Date Modified</div>
<div class="t" style="left:2214px;top:1327.9px;font-size:29px;color:#25282c;font-weight:400;letter-spacing:0.7px">2023-09-13 22:13&nbsp;&nbsp;by&nbsp; <span style="color:#2f70bd">Administrator</span></div>
<svg class="b" style="left:792px;top:1364px;" width="28" height="28" viewBox="0 0 28 28"><g fill="none" stroke="#6c757d" stroke-width="3.7" stroke-linecap="round" stroke-linejoin="round"><line x1="4.5" y1="23.4" x2="23.4" y2="4.5"/><path d="M15.7 3.8 H24 V12"/><path d="M3.9 15.6 V24 H12.2"/></g></svg>
<svg class="b" style="left:3515px;top:1364px;" width="28" height="28" viewBox="0 0 28 28"><g fill="none" stroke="#6c757d" stroke-width="3.7" stroke-linecap="round" stroke-linejoin="round"><line x1="5.5" y1="4.5" x2="24.3" y2="23.4"/><path d="M13 3.8 H4.9 V12"/><path d="M16.9 24 H24.9 V15.6"/></g></svg>
<div class="b" style="left:790px;top:1430px;width:1364px;height:610px;background:#fff;border-radius:12px;box-shadow:0 2px 6px rgba(0,0,0,0.08)"></div>
<div class="t" style="left:808px;top:1451.0px;font-size:30px;color:#25282c;font-weight:700;">Scheduled Calls as Owner</div>
<div class="b" style="left:790px;top:1498px;width:1364px;height:2px;background:#e6e9ec"></div>
<div class="t" style="left:806px;top:1531.5px;font-size:23.5px;color:#25282c;font-weight:400;">Start Date</div>
<div class="t" style="left:1261px;top:1531.5px;font-size:23.5px;color:#25282c;font-weight:400;">Subject</div>
<div class="t" style="left:1715px;top:1531.5px;font-size:23.5px;color:#25282c;font-weight:400;">Related to</div>
<div class="b" style="left:1243px;top:1509px;width:2px;height:66px;background:#e3e6e9"></div>
<div class="b" style="left:1697px;top:1509px;width:2px;height:66px;background:#e3e6e9"></div>
<div class="b" style="left:790px;top:1584px;width:1364px;height:2px;background:#e6e9ec"></div>
<div class="t" style="left:806px;top:1600.0px;height:39px;padding:0 10px;line-height:40px;font-size:22.5px;font-weight:700;color:#b3261e;background:#f9d6d6;border-radius:4px;box-sizing:border-box">2023-09-12 23:35</div>
<div class="t" style="left:1265px;top:1608.7px;font-size:25px;color:#2f70bd;font-weight:400;letter-spacing:0.2px">Call: Outbound</div>
<svg class="b" style="left:1719px;top:1600px;" width="39" height="39" viewBox="0 0 39 39"><circle cx="19.5" cy="19.5" r="19.5" fill="#4cb574"/><rect x="13" y="11" width="13" height="17" rx="2" fill="none" stroke="#fff" stroke-width="2.2"/><g fill="#fff"><rect x="16" y="14.5" width="2.4" height="2.4"/><rect x="20.6" y="14.5" width="2.4" height="2.4"/><rect x="16" y="19" width="2.4" height="2.4"/><rect x="20.6" y="19" width="2.4" height="2.4"/><rect x="18.3" y="23" width="2.4" height="5"/></g></svg>
<div class="t" style="left:1770px;top:1607.2px;font-size:25px;color:#2f70bd;font-weight:400;letter-spacing:-0.8px">Q3 ARVRO III PR</div>
<div class="b" style="left:790px;top:1659px;width:1364px;height:2px;background:#e6e9ec"></div>
<div class="t" style="left:806px;top:1673.9px;height:39px;padding:0 10px;line-height:40px;font-size:22.5px;font-weight:700;color:#b3261e;background:#f9d6d6;border-radius:4px;box-sizing:border-box">2023-09-12 23:34</div>
<div class="t" style="left:1265px;top:1682.6px;font-size:25px;color:#2f70bd;font-weight:400;letter-spacing:0.2px">Call: Outbound</div>
<svg class="b" style="left:1719px;top:1674px;" width="39" height="39" viewBox="0 0 39 39"><circle cx="19.5" cy="19.5" r="19.5" fill="#4cb574"/><rect x="13" y="11" width="13" height="17" rx="2" fill="none" stroke="#fff" stroke-width="2.2"/><g fill="#fff"><rect x="16" y="14.5" width="2.4" height="2.4"/><rect x="20.6" y="14.5" width="2.4" height="2.4"/><rect x="16" y="19" width="2.4" height="2.4"/><rect x="20.6" y="19" width="2.4" height="2.4"/><rect x="18.3" y="23" width="2.4" height="5"/></g></svg>
<div class="t" style="left:1770px;top:1681.1px;font-size:25px;color:#2f70bd;font-weight:400;letter-spacing:0.1px">Lexington Shores Corp</div>
<div class="b" style="left:790px;top:1733px;width:1364px;height:2px;background:#e6e9ec"></div>
<div class="t" style="left:806px;top:1747.8px;height:39px;padding:0 10px;line-height:40px;font-size:22.5px;font-weight:700;color:#b3261e;background:#f9d6d6;border-radius:4px;box-sizing:border-box">2023-09-11 16:55</div>
<div class="t" style="left:1265px;top:1756.5px;font-size:25px;color:#2f70bd;font-weight:400;letter-spacing:0.2px">Call: Outbound</div>
<svg class="b" style="left:1719px;top:1748px;" width="39" height="39" viewBox="0 0 39 39"><circle cx="19.5" cy="19.5" r="19.5" fill="#4cb574"/><rect x="13" y="11" width="13" height="17" rx="2" fill="none" stroke="#fff" stroke-width="2.2"/><g fill="#fff"><rect x="16" y="14.5" width="2.4" height="2.4"/><rect x="20.6" y="14.5" width="2.4" height="2.4"/><rect x="16" y="19" width="2.4" height="2.4"/><rect x="20.6" y="19" width="2.4" height="2.4"/><rect x="18.3" y="23" width="2.4" height="5"/></g></svg>
<div class="t" style="left:1770px;top:1755.0px;font-size:25px;color:#2f70bd;font-weight:400;letter-spacing:0.1px">Coolview Net Ltd</div>
<div class="b" style="left:790px;top:1807px;width:1364px;height:2px;background:#e6e9ec"></div>
<div class="t" style="left:806px;top:1821.7px;height:39px;padding:0 10px;line-height:40px;font-size:22.5px;font-weight:700;color:#b3261e;background:#f9d6d6;border-radius:4px;box-sizing:border-box">2023-09-11 16:51</div>
<div class="t" style="left:1265px;top:1830.4px;font-size:25px;color:#2f70bd;font-weight:400;letter-spacing:0.2px">Call: Outbound</div>
<svg class="b" style="left:1719px;top:1822px;" width="39" height="39" viewBox="0 0 39 39"><circle cx="19.5" cy="19.5" r="19.5" fill="#4cb574"/><rect x="13" y="11" width="13" height="17" rx="2" fill="none" stroke="#fff" stroke-width="2.2"/><g fill="#fff"><rect x="16" y="14.5" width="2.4" height="2.4"/><rect x="20.6" y="14.5" width="2.4" height="2.4"/><rect x="16" y="19" width="2.4" height="2.4"/><rect x="20.6" y="19" width="2.4" height="2.4"/><rect x="18.3" y="23" width="2.4" height="5"/></g></svg>
<div class="t" style="left:1770px;top:1828.9px;font-size:25px;color:#2f70bd;font-weight:400;letter-spacing:0.1px">Davenport Investing</div>
<div class="b" style="left:790px;top:1881px;width:1364px;height:2px;background:#e6e9ec"></div>
<div class="t" style="left:806px;top:1895.6px;height:39px;padding:0 10px;line-height:40px;font-size:22.5px;font-weight:700;color:#b3261e;background:#f9d6d6;border-radius:4px;box-sizing:border-box">2023-09-08 16:49</div>
<div class="t" style="left:1265px;top:1904.3px;font-size:25px;color:#2f70bd;font-weight:400;letter-spacing:0.2px">Call: Outbound</div>
<svg class="b" style="left:1719px;top:1896px;" width="39" height="39" viewBox="0 0 39 39"><circle cx="19.5" cy="19.5" r="19.5" fill="#4cb574"/><rect x="13" y="11" width="13" height="17" rx="2" fill="none" stroke="#fff" stroke-width="2.2"/><g fill="#fff"><rect x="16" y="14.5" width="2.4" height="2.4"/><rect x="20.6" y="14.5" width="2.4" height="2.4"/><rect x="16" y="19" width="2.4" height="2.4"/><rect x="20.6" y="19" width="2.4" height="2.4"/><rect x="18.3" y="23" width="2.4" height="5"/></g></svg>
<div class="t" style="left:1770px;top:1902.8px;font-size:25px;color:#2f70bd;font-weight:400;letter-spacing:0.1px">Coolview Net Ltd</div>
<div class="b" style="left:2186px;top:1430px;width:1364px;height:610px;background:#fff;border-radius:12px;box-shadow:0 2px 6px rgba(0,0,0,0.08)"></div>
<svg class="b" style="left:2204px;top:1447px;" width="36" height="36" viewBox="0 0 36 36"><circle cx="18" cy="18" r="18" fill="#c07ce9"/><g fill="none" stroke="#f3d9fb" stroke-width="2" stroke-linejoin="round"><ellipse cx="18" cy="13.8" rx="4.2" ry="4.9"/><path d="M15 19.6 L11 21.4 Q10.2 22 10.2 23.2 V25.6 H25.8 V23.2 Q25.8 22 25 21.4 L21 19.6"/></g></svg>
<div class="t" style="left:2265px;top:1453.3px;font-size:28.5px;color:#25282c;font-weight:700;">Related Contacts</div>
<div class="b" style="left:2186px;top:1563px;width:1364px;height:2px;background:#e3e6ea"></div>
<div class="b" style="left:2186px;top:1558px;width:455px;height:7px;background:#3274c0"></div>
<div class="t" style="left:2413px;transform:translateX(-50%);top:1517.1px;font-size:22.75px;color:#3274c0;font-weight:700;">Contacts</div>
<div class="t" style="left:2868px;transform:translateX(-50%);top:1521.8px;font-size:22px;color:#25282c;font-weight:700;">Leads</div>
<div class="t" style="left:3322px;transform:translateX(-50%);top:1521.8px;font-size:22px;color:#25282c;font-weight:700;">Case</div>
<div class="t" style="left:2203px;top:1596.7px;font-size:23.25px;color:#25282c;font-weight:400;">Name</div>
<div class="t" style="left:2490px;top:1596.7px;font-size:23.25px;color:#25282c;font-weight:400;">Title</div>
<div class="t" style="left:2779px;top:1596.7px;font-size:23.25px;color:#25282c;font-weight:400;">Account Name</div>
<div class="t" style="left:3067px;top:1596.7px;font-size:23.25px;color:#25282c;font-weight:400;">Email Address</div>
<div class="t" style="left:3355px;top:1596.7px;font-size:23.25px;color:#25282c;font-weight:400;">Office Phone</div>
<div class="b" style="left:2472px;top:1575px;width:2px;height:66px;background:#e3e6e9"></div>
<div class="b" style="left:2760px;top:1575px;width:2px;height:66px;background:#e3e6e9"></div>
<div class="b" style="left:3048px;top:1575px;width:2px;height:66px;background:#e3e6e9"></div>
<div class="b" style="left:3336px;top:1575px;width:2px;height:66px;background:#e3e6e9"></div>
<div class="b" style="left:2186px;top:1649px;width:1364px;height:2px;background:#e6e9ec"></div>
<div class="t" style="left:2207px;top:1675.2px;font-size:25px;color:#2f70bd;font-weight:400;">Tiana Parkerson</div>
<div class="t" style="left:2490px;top:1676.2px;font-size:25px;color:#25282c;font-weight:400;">VP Operations</div>
<div class="t" style="left:2782px;top:1675.2px;font-size:25px;color:#2f70bd;font-weight:400;">Nimble Technologie...</div>
<div class="t" style="left:3355px;top:1676.2px;font-size:25px;color:#2f70bd;font-weight:400;">(431) 655-0052</div>
<div class="b" style="left:3462px;top:1884px;width:80px;height:80px;background:#3274c0;border-radius:50%;box-shadow:0 1px 5px rgba(0,0,0,0.38)"></div>
<svg class="b" style="left:3486px;top:1910px;" width="32" height="28" viewBox="0 0 32 28"><g fill="#fff"><rect x="0" y="0" width="32" height="4" rx="2"/><rect x="0" y="12" width="32" height="4" rx="2"/><rect x="0" y="24" width="32" height="4" rx="2"/></g></svg>
</body></html>
